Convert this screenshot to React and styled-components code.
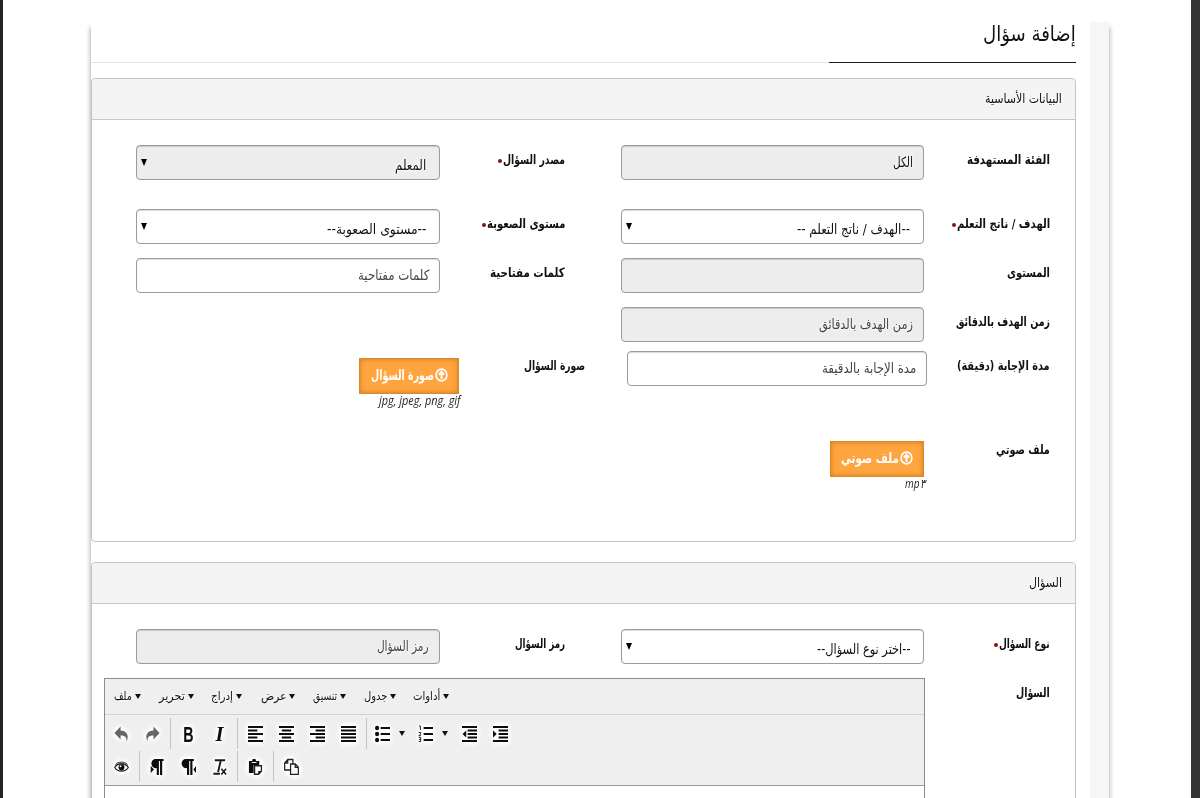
import { useLayoutEffect, useRef, useState } from 'react';
import styled, { createGlobalStyle } from 'styled-components';

// keeps a line of text at a fixed width, whatever arabic font is installed
function Fit({ width, children }) {
    const ref = useRef(null);
    const [scale, setScale] = useState(1);
    useLayoutEffect(() => {
        setScale(width / ref.current.offsetWidth);
    }, [width, children]);
    return (
        <FitBox $width={width}>
            <FitText ref={ref} style={{ transform: `scaleX(${scale})` }}>{children}</FitText>
        </FitBox>
    )
}

function Label({ text, width, required }) {
    return (
        <LabelBox>
            <Fit width={width}>{text}</Fit>
            {required && <Dot />}
        </LabelBox>
    )
}

function Input({ text, width, disabled, dark, shifted }) {
    return (
        <Control $disabled={disabled} $dark={dark} $shifted={shifted}>
            {text && <Fit width={width}>{text}</Fit>}
        </Control>
    )
}

function Select({ text, width, disabled }) {
    return (
        <SelectControl $disabled={disabled} $dark>
            <Fit width={width}>{text}</Fit>
            <SelectArrow viewBox="0 0 6 7"><path d="M0 0h6L3 7z" /></SelectArrow>
        </SelectControl>
    )
}

function Upload({ text, width, hint, hintWidth, image }) {
    return (
        <UploadBox $image={image}>
            <UploadButton $image={image}>
                <svg width="13" height="14" viewBox="0 0 13 13" preserveAspectRatio="none" fill="none" stroke="#fff">
                    <circle cx="6.5" cy="6.5" r="5.4" strokeWidth="1.7" />
                    <path d="M6.5 10.2V4M3.8 6.3l2.7-2.8 2.7 2.8" strokeWidth="1.9" />
                </svg>
                <Fit width={width}>{text}</Fit>
            </UploadButton>
            <Hint><Fit width={hintWidth}>{hint}</Fit></Hint>
        </UploadBox>
    )
}

function Icon({ children }) {
    return <IconSvg viewBox="0 0 16 16" preserveAspectRatio="none">{children}</IconSvg>
}

const menus = [
    { text: 'ملف', width: 18, size: 45 },
    { text: 'تحرير', width: 26, size: 52 },
    { text: 'إدراج', width: 22, size: 50 },
    { text: 'عرض', width: 25, size: 52 },
    { text: 'تنسيق', width: 24, size: 51 },
    { text: 'جدول', width: 23, size: 49 },
    { text: 'أداوات', width: 27, size: 50 },
];

const undo = <path fill="#666" d="M7 .5v4c6 .3 9.500 4 6.500 11 0-4.500-2-6-6.500-6V13.500L.5 7z" />;
const pilcrow = <path d="M5 0h9.500v2H13v14h-2.300V2H9.500v14H7.200V9A4.500 4.500 0 0 1 5 0z" />;

function Editor() {
    return (
        <EditorBox>
            <MenuBar>
                {menus.map((m) => (
                    <MenuItem key={m.text} $size={m.size}>
                        <Fit width={m.width}>{m.text}</Fit>
                        <Caret />
                    </MenuItem>
                ))}
            </MenuBar>
            <Tools>
                <ToolRow>
                    <Group>
                        <Tool><Icon>{undo}</Icon></Tool>
                        <Tool><Icon><g transform="matrix(-1 0 0 1 16 0)">{undo}</g></Icon></Tool>
                    </Group>
                    <Group>
                        <Tool><Icon><text x="2.300" y="15.500" fontFamily="Liberation Sans" fontWeight="700" fontSize="21.500" textLength="11" lengthAdjust="spacingAndGlyphs">B</text></Icon></Tool>
                        <Tool><Icon><text x="8" y="15" textAnchor="middle" fontFamily="Liberation Serif" fontStyle="italic" fontWeight="700" fontSize="22">I</text></Icon></Tool>
                    </Group>
                    <Group>
                        <Tool><Icon><path d="M0 0h16v2H0zM0 3.500h10v2H0zM0 7h16v2H0zM0 10.500h10v2H0zM0 14h16v2H0z" /></Icon></Tool>
                        <Tool><Icon><path d="M0 0h16v2H0zM3 3.500h10v2H3zM0 7h16v2H0zM3 10.500h10v2H3zM0 14h16v2H0z" /></Icon></Tool>
                        <Tool><Icon><path d="M0 0h16v2H0zM6 3.500h10v2H6zM0 7h16v2H0zM6 10.500h10v2H6zM0 14h16v2H0z" /></Icon></Tool>
                        <Tool><Icon><path d="M0 0h16v2H0zM0 3.500h16v2H0zM0 7h16v2H0zM0 10.500h16v2H0zM0 14h16v2H0z" /></Icon></Tool>
                    </Group>
                    <Group>
                        <Tool $split>
                            <Icon>
                                <path d="M6 1h10v2H6zM6 7h10v2H6zM6 13h10v2H6z" />
                                <circle cx="2.200" cy="2" r="2.200" /><circle cx="2.200" cy="8" r="2.200" /><circle cx="2.200" cy="14" r="2.200" />
                            </Icon>
                            <Caret />
                        </Tool>
                        <Tool $split>
                            <Icon>
                                <path d="M6 1h10v2H6zM6 7h10v2H6zM6 13h10v2H6z" />
                                <path d="M1 0h1.500v4M.8 6.500h2v1.700l-2 1.500h2.400M.8 11.500h2v4h-2M1.200 13.500h1.500" fill="none" stroke="#222" />
                            </Icon>
                            <Caret />
                        </Tool>
                        <Tool><Icon><path d="M0 0h16v2H0zM6 3.500h10v2H6zM6 7h10v2H6zM6 10.500h10v2H6zM0 14h16v2H0zM4.500 4.500v7L.5 8z" /></Icon></Tool>
                        <Tool><Icon><path d="M0 0h16v2H0zM6 3.500h10v2H6zM6 7h10v2H6zM6 10.500h10v2H6zM0 14h16v2H0zM0 4.500v7L4 8z" /></Icon></Tool>
                    </Group>
                </ToolRow>
                <ToolRow>
                    <Group>
                        <Tool>
                            <Icon>
                                <path d="M.7 8.500C4 3.500 12 3.500 15.300 8.500 12 13.300 4 13.300.7 8.500z" fill="none" stroke="#222" strokeWidth="1.300" />
                                <path d="M1.500 5.500C5 2.300 11 2.300 14.500 5.500" fill="none" stroke="#222" />
                                <circle cx="8" cy="8.300" r="3.100" />
                                <circle cx="7" cy="7.300" r="1" fill="#fff" />
                            </Icon>
                        </Tool>
                    </Group>
                    <Group>
                        <Tool><Icon>{pilcrow}<path d="M.8 7v7l3.400-3.500z" /></Icon></Tool>
                        <Tool><Icon><g transform="translate(-.8 0)">{pilcrow}</g><path d="M16 7v7l-2.800-3.500z" /></Icon></Tool>
                        <Tool>
                            <Icon>
                                <path d="M3 1.200h11M9.500 1L6.500 13M1.500 14.800h7" fill="none" stroke="#1a1a1a" strokeWidth="2" />
                                <path d="M10 9.700l5 5.800M15 9.700l-5 5.800" fill="none" stroke="#1a1a1a" strokeWidth="1.700" />
                            </Icon>
                        </Tool>
                    </Group>
                    <Group>
                        <Tool>
                            <Icon>
                                <path d="M1 2h3.500V1c0-1.300 4-1.300 4 0v1H12v4H6v8H1z" />
                                <path d="M4 3.500h5" stroke="#fff" />
                                <path d="M7 6.700h7.300v5.600l-3 3H7z" fill="#fff" stroke="#222" strokeWidth="1.400" />
                                <path d="M11 15v-3h3z" />
                            </Icon>
                        </Tool>
                    </Group>
                    <Group>
                        <Tool>
                            <Icon>
                                <path d="M4 .5h5.500V11H.7V4zM4 .5V4H.7" fill="#fff" stroke="#222" strokeWidth="1.300" />
                                <path d="M7 5h5l3.300 3.300v7H7zM12 5v3.300h3.300" fill="#fff" stroke="#222" strokeWidth="1.300" />
                            </Icon>
                        </Tool>
                    </Group>
                </ToolRow>
            </Tools>
        </EditorBox>
    )
}

export default function App() {
    return (
        <>
        <GlobalStyle />
        <Page>
            <Sheet>
                <Content>
                    <Title><TitleText><Fit width={93}>إضافة سؤال</Fit></TitleText></Title>
                    <Panel $height={464}>
                        <PanelHead><Fit width={77}>البيانات الأساسية</Fit></PanelHead>
                        <Row $height={64}>
                            <Label text="الفئة المستهدفة" width={83} />
                            <Input text="الكل" width={20} disabled dark />
                            <Label text="مصدر السؤال" width={62} required />
                            <Select text="المعلم" width={31} disabled />
                        </Row>
                        <Row $height={49}>
                            <Label text="الهدف / ناتج التعلم" width={93} required />
                            <Select text="--الهدف / ناتج التعلم --" width={113} />
                            <Label text="مستوى الصعوبة" width={78} required />
                            <Select text="--مستوى الصعوبة--" width={99} />
                        </Row>
                        <Row $height={49}>
                            <Label text="المستوى" width={43} />
                            <Input disabled />
                            <Label text="كلمات مفتاحية" width={75} />
                            <Input text="كلمات مفتاحية" width={71} />
                        </Row>
                        <Row $height={44}>
                            <Label text="زمن الهدف بالدقائق" width={94} />
                            <Input text="زمن الهدف بالدقائق" width={94} disabled />
                        </Row>
                        <Row $height={84} $wide>
                            <Label text="مدة الإجابة (دقيقة)" width={93} />
                            <Input text="مدة الإجابة بالدقيقة" width={94} shifted />
                            <Label text="صورة السؤال" width={61} />
                            <Upload text="صورة السؤال" width={63} hint="jpg, jpeg, png, gif" hintWidth={81} image />
                        </Row>
                        <Row $height={70}>
                            <Label text="ملف صوتي" width={54} />
                            <Upload text="ملف صوتي" width={58} hint="mp۳" hintWidth={20} />
                        </Row>
                    </Panel>
                    <Panel $height={300}>
                        <PanelHead><Fit width={33}>السؤال</Fit></PanelHead>
                        <Row $height={49}>
                            <Label text="نوع السؤال" width={51} required />
                            <Select text="--اختر نوع السؤال--" width={93} />
                            <Label text="رمز السؤال" width={50} />
                            <Input text="رمز السؤال" width={52} disabled />
                        </Row>
                        <EditorRow>
                            <Label text="السؤال" width={34} />
                            <Editor />
                        </EditorRow>
                    </Panel>
                </Content>
            </Sheet>
        </Page>
        </>
    )
}

//style

const GlobalStyle = createGlobalStyle`
*{
    box-sizing:border-box;
}
body{
    margin:0;
    overflow:hidden;
    background:#fff;
}
`;
const Page = styled.div`
width:1200px;
height:798px;
padding:22px 82px 0 88px;
overflow:hidden;
direction:rtl;
border-left:3px solid #252525;
border-right:9px solid #333;
background:#fff;
font-family:"DejaVu Sans Condensed", "DejaVu Sans", sans-serif;
font-size:14px;
color:#111;
`;
const Sheet = styled.div`
height:820px;
padding-right:19px;
background:linear-gradient(to left, #f6f6f6 19px, #fff 19px);
box-shadow:0 5px 5px rgba(0,0,0,.42);
`;
const Content = styled.div`
padding-right:14px;
`;
const Title = styled.div`
height:41px;
border-bottom:1px solid #e2e2e2;
`;
const TitleText = styled.div`
display:flex;
align-items:center;
width:247px;
height:41px;
padding-bottom:16px;
border-bottom:1px solid #15240f;
font-size:21px;
`;
const FitBox = styled.span`
display:block;
flex:none;
width:${(p) => p.$width}px;
white-space:nowrap;
`;
const FitText = styled.span`
display:inline-block;
transform-origin:right center;
`;
const Panel = styled.section`
height:${(p) => p.$height}px;
margin:15px 0 20px;
border:1px solid #c4c4c4;
border-radius:4px;
background:#fff;
`;
const PanelHead = styled.header`
display:flex;
align-items:center;
height:41px;
margin-bottom:25px;
padding:0 13px 2px;
border-bottom:1px solid #c8c8c8;
border-radius:4px 4px 0 0;
background:#f4f4f4;
font-size:13px;
text-shadow:0 0 3px #fff, 0 0 3px #fff;
`;
const Row = styled.div`
display:grid;
grid-template-columns:126px 303px 181px 304px;
align-items:start;
height:${(p) => p.$height}px;
padding-right:25px;
> :nth-child(3){
    margin-right:${(p) => (p.$wide ? 36 : 56)}px;
}
`;
const EditorRow = styled.div`
display:flex;
padding-right:25px;
> :first-child{
    width:125px;
}
`;
const LabelBox = styled.div`
display:flex;
align-items:center;
height:28px;
font-size:13px;
font-weight:700;
color:#111;
`;
const Dot = styled.i`
width:4px;
height:4px;
margin-right:1px;
margin-top:4px;
border-radius:50%;
background:#8d1111;
`;
const Control = styled.div`
display:flex;
align-items:center;
height:35px;
width:${(p) => (p.$shifted ? '300px' : '100%')};
margin-right:${(p) => (p.$shifted ? '-3px' : '0')};
padding:0 10px 1px;
border:1px solid #9c9c9c;
border-radius:4px;
background:${(p) => (p.$disabled ? '#ededed' : '#fff')};
box-shadow:inset 0 1px 1px rgba(0,0,0,.15);
color:${(p) => (p.$dark ? '#111' : '#444')};
text-shadow:0 0 3px #fff, 0 0 3px #fff;
`;
const SelectControl = styled(Control)`
justify-content:space-between;
padding:5px 13px 0 4px;
`;
const SelectArrow = styled.svg`
width:6px;
height:7px;
margin-bottom:5px;
fill:#000;
`;
const UploadBox = styled.div`
padding-top:${(p) => (p.$image ? 7 : 6)}px;
margin-right:${(p) => (p.$image ? -19 : 0)}px;
`;
const UploadButton = styled.div`
display:flex;
align-items:center;
gap:1px;
width:${(p) => (p.$image ? 100 : 94)}px;
height:36px;
padding:0 10px 2px 0;
border:1px solid #d98a26;
background:#ffa53f;
box-shadow:inset 0 0 5px #c97a1c;
color:#fff;
font-weight:700;
`;
const Hint = styled.div`
height:16px;
margin-right:-1px;
font-family:"Open Sans", "DejaVu Sans", sans-serif;
font-size:12.5px;
line-height:13px;
font-style:italic;
color:#222;
`;
const EditorBox = styled.div`
direction:ltr;
width:821px;
height:180px;
border:1px solid #8c8c8c;
background:#fff;
`;
const MenuBar = styled.div`
display:flex;
align-items:center;
height:36px;
padding:0 0 1px 9px;
border-bottom:1px solid #d4d4d4;
background:#efefef;
font-size:12px;
text-shadow:0 0 3px #fff, 0 0 3px #fff;
`;
const MenuItem = styled.div`
display:flex;
align-items:center;
gap:3px;
width:${(p) => p.$size}px;
${FitText}{
    transform-origin:left center;
}
`;
const Caret = styled.i`
border:3.5px solid transparent;
border-width:5px 3.5px 0;
border-top-color:#111;
`;
const Tools = styled.div`
height:71px;
padding-top:3px;
border-bottom:1px solid #999;
background:#efefef;
`;
const ToolRow = styled.div`
display:flex;
height:33px;
`;
const Group = styled.div`
display:flex;
align-items:center;
height:31px;
padding:0 2px 0 1px;
& + &{
    padding-left:2px;
    border-left:1px solid #c4c4c4;
}
`;
const Tool = styled.div`
display:flex;
align-items:center;
justify-content:${(p) => (p.$split ? 'flex-start' : 'center')};
gap:9px;
width:${(p) => (p.$split ? 42.5 : 31)}px;
padding-left:${(p) => (p.$split ? 6 : 0)}px;
`;
const IconSvg = styled.svg`
width:15px;
height:16px;
overflow:visible;
fill:#0d0d0d;
filter:drop-shadow(0 0 2px #fff) drop-shadow(0 0 2px #fff) drop-shadow(0 0 1px #fff);
`;
